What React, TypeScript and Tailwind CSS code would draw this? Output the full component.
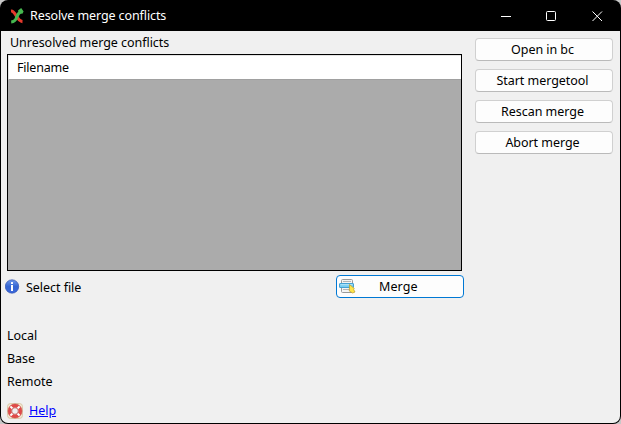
import React from "react";

function AppIcon() {
  return (
    <svg width="14" height="16" viewBox="0 0 14 16" fill="none">
      <path d="M1 3 C6 2.6 6.5 13.3 12.5 13.6" stroke="#e5392c" strokeWidth="3.2" />
      <path d="M1.2 14 C8.5 13.5 5 6.5 10.8 3.6" stroke="#46b850" strokeWidth="3.1" />
      <path d="M8 2.4 L11.2 0 L13.6 3.4 L12.4 5.8 L9.5 5.4 Z" fill="#46b850" />
    </svg>
  );
}

function InfoIcon() {
  return (
    <svg width="15" height="15" viewBox="0 0 15 15">
      <defs>
        <linearGradient id="info" x1="0" y1="0" x2="0" y2="1">
          <stop offset="0" stopColor="#6f98ea" />
          <stop offset="0.5" stopColor="#3566d2" />
          <stop offset="1" stopColor="#3d68dc" />
        </linearGradient>
      </defs>
      <circle cx="7" cy="7.5" r="6.7" fill="url(#info)" stroke="#3455b0" strokeWidth="0.7" />
      <rect x="6" y="3" width="2" height="2" rx="0.5" fill="#fff" />
      <rect x="6" y="6" width="2" height="6" fill="#fff" />
    </svg>
  );
}

function MergeIcon() {
  return (
    <svg width="17" height="15" viewBox="0 0 17 15">
      <rect x="2.5" y="0.5" width="11" height="13" rx="1" fill="#f4f4f4" stroke="#9a9a9a" />
      <path d="M4 2.5h8M4 10.5h7" stroke="#b5b5b5" />
      <rect x="0.5" y="4.5" width="14" height="4" rx="0.5" fill="#79cdf2" stroke="#45a2d4" />
      <path d="M1.5 5.7h12" stroke="#b4e6fb" />
      <path d="M10.5 5.5 L15.3 9.5 L14.6 10.5 L16 13 L13.6 14 L10.3 12 Z" fill="#ffe64a" stroke="#b8962a" strokeWidth="0.7" />
    </svg>
  );
}

function HelpIcon() {
  return (
    <svg width="16" height="16" viewBox="0 0 16 16">
      <rect x="0.5" y="0.5" width="15" height="15" rx="3" fill="#f1e6d2" stroke="#d5c39f" strokeWidth="0.8" />
      <circle cx="8" cy="8" r="5.2" fill="none" stroke="#e14a48" strokeWidth="3.6" />
      <path d="M3.2 3.2l2.7 2.7M12.8 3.2l-2.7 2.7M3.2 12.8l2.7-2.7M12.8 12.8l-2.7-2.7" stroke="#fff" strokeWidth="2" />
      <circle cx="8" cy="8" r="7" fill="none" stroke="#c94540" strokeWidth="0.6" />
      <circle cx="8" cy="8" r="3.3" fill="#f0f0f0" stroke="#b54444" strokeWidth="0.7" />
    </svg>
  );
}

const actions = ["Open in bc", "Start mergetool", "Rescan merge", "Abort merge"];

export default function App() {
  return (
    <div className="h-[424px] w-[621px] overflow-hidden bg-[#c8c8c8] font-['Noto_Sans',sans-serif] text-[12.5px] leading-[18px] tracking-[-0.04px] text-black">
      <div className="flex h-full flex-col overflow-hidden rounded-lg bg-black px-px pb-px">
        <header className="flex h-[31px] shrink-0 items-center pl-[9px] text-white">
          <AppIcon />
          <h1 className="ml-[6px] whitespace-nowrap tracking-[-0.1px]">Resolve merge conflicts</h1>
          <div className="ml-auto flex items-center pr-[16px]">
            <svg width="103" height="12" viewBox="0 0 103 12" fill="none" stroke="#fff">
              <path d="M0 6.5h10" />
              <rect x="45.5" y="1.5" width="9" height="9" rx="1" />
              <path d="M91.5 1.5l9.5 9.5M101 1.5l-9.5 9.5" />
            </svg>
          </div>
        </header>
        <main className="flex flex-1 overflow-hidden rounded-b-[7px] bg-[#f0f0f0]">
          <section className="flex w-[463px] flex-col">
            <h2 className="ml-[9px] mt-[3px] h-[20px] whitespace-nowrap">Unresolved merge conflicts</h2>
            <div className="ml-[6px] h-[217px] w-[455px] shrink-0 border border-black bg-[#ababab]">
              <div className="flex h-[25px] items-center border-b border-l border-t border-[#a0a0a0] border-t-[#e3e3e3] border-l-[#e3e3e3] bg-white pl-[8px] tracking-[-0.2px]">
                <span className="mt-px">Filename</span>
              </div>
            </div>
            <div className="flex h-[31px] items-center pl-[4px]">
              <InfoIcon />
              <span className="ml-[6px] mt-[2px] whitespace-nowrap">Select file</span>
              <button className="ml-auto flex h-[23px] w-[128px] items-center rounded border border-[#0078d4] bg-[#fdfdfd] pl-[2px]">
                <MergeIcon />
                <span className="ml-[23px] tracking-[0.1px]">Merge</span>
              </button>
            </div>
            <div className="mt-[25px] flex flex-col gap-[5px] pl-[6px]">
              <div>Local</div>
              <div>Base</div>
              <div>Remote</div>
            </div>
            <div className="mt-[11px] flex items-center pl-[6px]">
              <HelpIcon />
              <a href="#help" className="ml-[6px] text-[#0000ff] underline underline-offset-1">Help</a>
            </div>
          </section>
          <aside className="ml-[11px] mt-[7px] flex w-[138px] flex-col gap-2">
            {actions.map((label) => (
              <button key={label} className="flex h-[23px] items-center justify-center whitespace-nowrap rounded border border-[#d0d0d0] border-b-[#bababa] bg-[#fdfdfd] pr-[3px]">
                {label}
              </button>
            ))}
          </aside>
        </main>
      </div>
    </div>
  );
}
